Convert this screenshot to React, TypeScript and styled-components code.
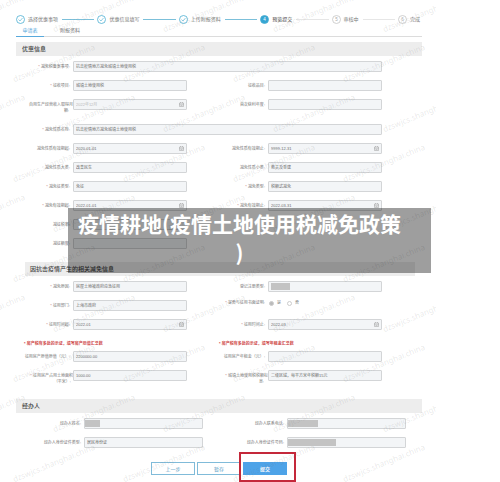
import React, { useId } from "react";
import styled, { createGlobalStyle, css } from "styled-components";

const GlobalStyle = createGlobalStyle`
  * { box-sizing: border-box; }
  body {
    margin: 0;
    background: #fff;
    color: #777;
    font-family: "Liberation Sans", "Noto Sans CJK SC", sans-serif;
    font-size: 4px;
    line-height: 6px;
  }
`;

const Page = styled.div`
  position: relative;
  width: calc(100% - 64px);
  overflow: hidden;
`;

const Content = styled.main`
  padding: 15px 14px 8px 16px;
`;

const Steps = styled.ol`
  display: flex;
  align-items: center;
  gap: 3px;
  margin: 0;
  padding: 0 2px 0 0;
  list-style: none;
`;

type StepState = "done" | "current" | "todo";

const Step = styled.li<{ $state: StepState; $last: boolean }>`
  display: flex;
  align-items: center;
  gap: 3px;
  flex: ${(p) => (p.$last ? "0 0 auto" : "1 0 auto")};
  color: ${(p) => (p.$state === "current" ? "#444" : "#777")};
  font-size: 5px;
  line-height: 9px;
  white-space: nowrap;

  ${(p) =>
    !p.$last &&
    css`
      &::after {
        content: "";
        flex: 1;
        height: 1px;
        margin-left: 1px;
        background: ${p.$state === "done" ? "#7cc0da" : "#e6e6e6"};
      }
    `}
`;

const StepIcon = styled.svg`
  width: 9px;
  height: 9px;
  flex: none;
`;

const Tabs = styled.nav`
  display: flex;
  gap: 12px;
  height: 13px;
  border-bottom: 1px solid #dcdcdc;
`;

const Tab = styled.button<{ $active?: boolean }>`
  width: 28px;
  height: 13px;
  padding: 0;
  border: 0;
  border-bottom: 1px solid ${(p) => (p.$active ? "#58a9dc" : "transparent")};
  background: none;
  color: ${(p) => (p.$active ? "#4fa3da" : "#777")};
  font: inherit;
  font-size: 5px;
  white-space: nowrap;
`;

const SectionTitle = styled.h2<{ $inset?: boolean; $top: number }>`
  margin: ${(p) => p.$top}px ${(p) => (p.$inset ? "7px" : "0")} 5px
    ${(p) => (p.$inset ? "9px" : "0")};
  padding-left: ${(p) => (p.$inset ? 5 : 6)}px;
  background: #ededed;
  color: #444;
  font-size: 6px;
  font-weight: 500;
  line-height: 14px;
`;

const Rows = styled.div<{ $contact?: boolean }>`
  display: grid;
  grid-template-columns: ${(p) =>
    p.$contact ? "68px 1fr 84px 1fr" : "57px 1fr 81px 1fr"};
  row-gap: 8px;
  padding-right: ${(p) => (p.$contact ? 16 : 40)}px;
`;

const Field = styled.div<{ $wide?: boolean; $tall?: boolean; $left?: boolean }>`
  display: grid;
  grid-template-columns: subgrid;
  grid-column: ${(p) =>
    p.$wide ? "1 / -1" : p.$left ? "1 / span 2" : "span 2"};
  height: ${(p) => (p.$tall ? 17 : 11)}px;
`;

const Label = styled.label<{ $full?: boolean }>`
  padding: 3px ${(p) => (p.$full ? 0 : 3)}px 0 0;
  text-align: right;
  line-height: 6px;
  white-space: pre;
`;

const GroupLabel = styled.span`
  padding-right: 3px;
  text-align: right;
  line-height: 6px;
`;

const Star = styled.span`
  color: #b77;
`;

const Box = styled.div<{ $wide?: boolean; $flush?: boolean }>`
  display: flex;
  align-items: center;
  grid-column: ${(p) => (p.$wide ? "2 / -1" : "auto")};
  height: 11px;
  min-width: 0;
  padding: 0 ${(p) => (p.$flush ? 0 : 2)}px;
  border: 1px solid #d3d5d7;
  border-radius: 1px;
  background: #f3f5f7;
`;

const TextInput = styled.input<{ $faint?: boolean }>`
  flex: 1;
  min-width: 0;
  width: 100%;
  height: 9px;
  padding: 0;
  border: 0;
  outline: 0;
  background: none;
  color: ${(p) => (p.$faint ? "#bbb" : "#6c6c6c")};
  font: inherit;
  line-height: 9px;
`;

const Mask = styled.span<{ $size: number }>`
  flex: none;
  width: ${(p) => p.$size}px;
  height: 7px;
  background: #c3c3c3;
`;

const CalendarIcon = styled.svg`
  flex: none;
  width: 5px;
  height: 5px;
`;

const RadioGroup = styled.div`
  display: flex;
  gap: 6px;
  height: 6px;
  padding-left: 1px;
`;

const Radio = styled.label`
  display: flex;
  align-items: center;
  gap: 3px;

  input {
    appearance: none;
    width: 5px;
    height: 5px;
    margin: 0;
    border: 1px solid #ccc;
    border-radius: 50%;
    background: #fff;
  }
  input:checked {
    background: #bbb;
  }
`;

const Notice = styled.p<{ $second?: boolean }>`
  grid-column: span 2;
  margin: 2px 0 -5px;
  padding-left: ${(p) => (p.$second ? 32 : 8)}px;
  color: #cf4a4a;
  font-weight: 700;
  line-height: 8px;
  white-space: nowrap;
`;

const Actions = styled.div`
  display: flex;
  justify-content: center;
  gap: 2px;
  margin-top: 14px;
`;

const ActionButton = styled.button<{ $primary?: boolean }>`
  width: 44px;
  height: 13px;
  padding: 0;
  border: 1px solid ${(p) => (p.$primary ? "#4da3e8" : "#80bbd9")};
  background: ${(p) => (p.$primary ? "#4da3e8" : "#fff")};
  color: ${(p) => (p.$primary ? "#fff" : "#5c9cc4")};
  font: inherit;
  font-size: 5px;
  font-weight: ${(p) => (p.$primary ? 700 : 400)};
`;

const Highlighted = styled.span`
  position: relative;
  display: flex;

  &::after {
    content: "";
    position: absolute;
    inset: -10px -9px -7px -4px;
    border: 2px solid #c4283a;
    pointer-events: none;
  }
`;

const Watermarks = styled.div`
  position: absolute;
  inset: -16px 0 0;
  overflow: hidden;
  pointer-events: none;
`;

const WatermarkRow = styled.div<{ $shifted: boolean }>`
  display: flex;
  align-items: flex-end;
  height: 50px;
  margin-left: ${(p) => (p.$shifted ? -55 : -95)}px;

  span {
    flex: 0 0 110px;
    color: rgba(110, 110, 110, 0.16);
    font-family: "Noto Sans", sans-serif;
    font-size: 8px;
    line-height: 10px;
    white-space: nowrap;
    transform: rotate(-22deg);
    transform-origin: 0 100%;
  }
`;

const Banner = styled.div`
  position: absolute;
  top: 208px;
  left: 68px;
  right: 5px;
  padding: 1px 28px 6px 8px;
  background: rgba(0, 0, 0, 0.38);
  color: #fff;
  font-family: "Noto Sans CJK SC", sans-serif;
  font-size: 21px;
  font-weight: 700;
  line-height: 29px;
  line-break: anywhere;
  text-align: center;
`;

const steps: { text: string; state: StepState }[] = [
  { text: "选择优惠事项", state: "done" },
  { text: "优惠信息填写", state: "done" },
  { text: "上传附报资料", state: "done" },
  { text: "预览提交", state: "current" },
  { text: "审核中", state: "todo" },
  { text: "完成", state: "todo" },
];

function StepMark({ index, state }: { index: number; state: StepState }) {
  const current = state === "current";
  const stroke = state === "todo" ? "#c4c4c4" : "#4aaed2";
  return (
    <StepIcon viewBox="0 0 18 18" aria-hidden="true">
      <circle cx="9" cy="9" r="8" fill={current ? "#35a5d3" : "#fff"} stroke={stroke} strokeWidth="1.6" />
      {state === "done" ? (
        <path d="M5 9l3 3 5-6" fill="none" stroke={stroke} strokeWidth="1.2" />
      ) : (
        <text x="9" y="12.5" textAnchor="middle" fontSize="9" fill={current ? "#fff" : "#aaa"}>
          {index + 1}
        </text>
      )}
    </StepIcon>
  );
}

interface FormFieldProps {
  label: string;
  value?: string;
  required?: boolean;
  wide?: boolean;
  tall?: boolean;
  left?: boolean;
  full?: boolean;
  faint?: boolean;
  flush?: boolean;
  date?: boolean;
  mask?: number;
}

function FormField({ label, value = "", required, wide, tall, left, full, faint, flush, date, mask }: FormFieldProps) {
  const id = useId();
  return (
    <Field $wide={wide} $tall={tall} $left={left}>
      <Label htmlFor={id} $full={full}>
        {required && <Star>* </Star>}
        {label}
        {!full && ":"}
      </Label>
      <Box $wide={wide} $flush={flush}>
        {mask && <Mask $size={mask} />}
        <TextInput id={id} value={value} readOnly $faint={faint} />
        {date && (
          <CalendarIcon viewBox="0 0 10 10" aria-hidden="true">
            <path d="M1 2h8v7H1zM1 4.5h8M3 7h4M3 0v2M7 0v2" fill="none" stroke="#999" strokeWidth="1" />
          </CalendarIcon>
        )}
      </Box>
    </Field>
  );
}

export default function App() {
  return (
    <>
      <GlobalStyle />
      <Page>
        <Content>
          <Steps>
            {steps.map((step, i) => (
              <Step key={step.text} $state={step.state} $last={i === steps.length - 1}>
                <StepMark index={i} state={step.state} />
                {step.text}
              </Step>
            ))}
          </Steps>
          <Tabs>
            <Tab type="button" $active>申请表</Tab>
            <Tab type="button">附报资料</Tab>
          </Tabs>

          <SectionTitle $top={5}>优惠信息</SectionTitle>
          <Rows>
            <FormField label="减免税备案事项" value="抗击疫情地方减免城镇土地使用税" required wide />
            <FormField label="征收项目" value="城镇土地使用税" required />
            <FormField label="征收品目" />
            <FormField label={"自用生产经营收入取得月\n额:\u2003"} value="2022年12月" full faint date tall />
            <FormField label="首次获利年度" />
            <FormField label="减免性质名称" value="抗击疫情地方减免城镇土地使用税" required wide />
            <FormField label="减免性质有效期起" value="2020-01-01" date />
            <FormField label="减免性质有效期止" value="9999-12-31" date />
            <FormField label="减免性质大类" value="改善民生" />
            <FormField label="减免性质小类" value="救灾及重建" />
            <FormField label="减免征类型" value="免征" required />
            <FormField label="减免类型" value="税额式减免" required />
            <FormField label="减免有效期起" value="2022-01-01" required date />
            <FormField label="减免有效期止" value="2022-03-31" required date />
            <FormField label="减征税率" left />
            <FormField label="减征额度" left />
          </Rows>

          <SectionTitle $inset $top={13}>因抗击疫情产生的相关减免信息</SectionTitle>
          <Rows>
            <FormField label="减免原因" value="房屋土地被政府应急征用" required />
            <FormField label="登记注册类型" mask={19} />
            <FormField label="征用部门" value="上海市政府" required />
            <Field>
              <GroupLabel id="proof">
                <Star>* </Star>是否与征用书面证明:
              </GroupLabel>
              <RadioGroup role="radiogroup" aria-labelledby="proof">
                <Radio><input type="radio" name="proof" defaultChecked />是</Radio>
                <Radio><input type="radio" name="proof" />否</Radio>
              </RadioGroup>
            </Field>
            <FormField label="征用时间起" value="2022-01" required date />
            <FormField label="征用时间止" value="2022-03" required date />
            <Notice>* 房产税有多处的示证，填写房产原值汇总数</Notice>
            <Notice $second>* 房产税有多处的示证，填写年租金汇总数</Notice>
            <FormField label="征用房产原值原值（元）" value="2200000.00" />
            <FormField label="征用房产年租金（元）" />
            <FormField label={"征用房产占用土地面积\n（平米）:\u2002"} value="1000.00" required full />
            <FormField label={"城镇土地使用税税额标\n息:\u2003"} value="二级区域，每平方米年税额15元" required full />
          </Rows>

          <SectionTitle $top={18}>经办人</SectionTitle>
          <Rows $contact>
            <FormField label="经办人姓名" mask={15} flush />
            <FormField label="经办人联系电话" mask={30} flush />
            <FormField label="经办人身份证件类型" value="居民身份证" />
            <FormField label="经办人身份证件号码" mask={48} flush />
          </Rows>

          <Actions>
            <ActionButton type="button">上一步</ActionButton>
            <ActionButton type="button">暂存</ActionButton>
            <Highlighted>
              <ActionButton type="button" $primary>提交</ActionButton>
            </Highlighted>
          </Actions>
        </Content>

        <Watermarks aria-hidden="true">
          {Array.from({ length: 10 }, (_, row) => (
            <WatermarkRow key={row} $shifted={row % 2 === 0}>
              {Array.from({ length: 5 }, (_, col) => (
                <span key={col}>dzswjcs.shanghai.china</span>
              ))}
            </WatermarkRow>
          ))}
        </Watermarks>
        <Banner>疫情耕地(疫情土地使用税减免政策)</Banner>
      </Page>
    </>
  );
}
